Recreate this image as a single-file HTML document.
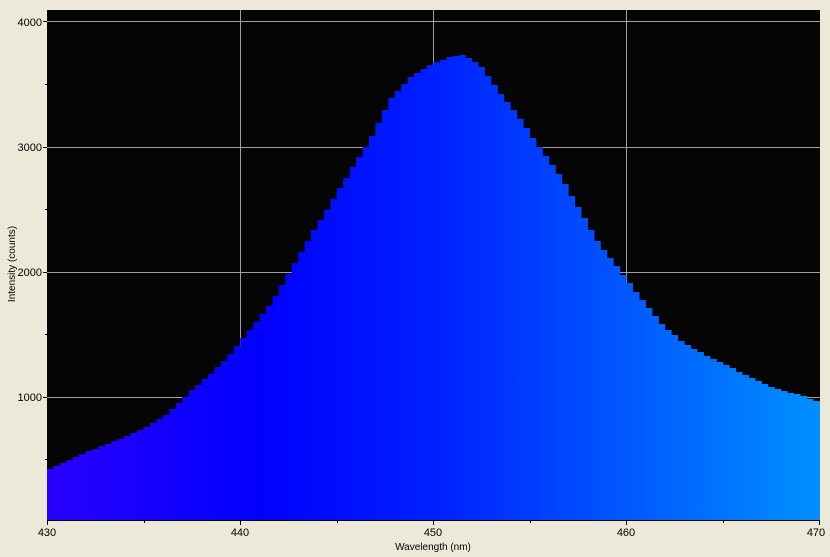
<!DOCTYPE html>
<html><head><style>
body{margin:0;background:#ece9d8;width:830px;height:557px;overflow:hidden;font-family:"Liberation Sans",sans-serif;}
svg{position:absolute;left:0;top:0}
</style></head><body>
<svg id="s" width="830" height="557" xmlns="http://www.w3.org/2000/svg" font-family="Liberation Sans, sans-serif" font-size="11">
<defs><linearGradient id="g" x1="47" x2="820" y1="0" y2="0" gradientUnits="userSpaceOnUse">
<stop offset="0" stop-color="#2a00ff"/><stop offset="0.28" stop-color="#0000ff"/><stop offset="0.5" stop-color="#0020ff"/><stop offset="0.75" stop-color="#0058ff"/><stop offset="1" stop-color="#0090ff"/></linearGradient></defs>
<rect x="47" y="10" width="773" height="510" fill="#050505"/>
<g stroke="#a0a0a0" stroke-width="1">
<line x1="240.5" y1="10" x2="240.5" y2="520"/><line x1="433.5" y1="10" x2="433.5" y2="520"/><line x1="626.5" y1="10" x2="626.5" y2="520"/>
<line x1="47" y1="21.5" x2="820" y2="21.5"/><line x1="47" y1="147.5" x2="820" y2="147.5"/><line x1="47" y1="272.5" x2="820" y2="272.5"/><line x1="47" y1="397.5" x2="820" y2="397.5"/>
</g>
<path id="p" fill="url(#g)"/>
<g stroke="#000"><line x1="47" y1="520.5" x2="820" y2="520.5"/>
<line x1="47.5" y1="520" x2="47.5" y2="525"/><line x1="240.5" y1="520" x2="240.5" y2="525"/><line x1="433.5" y1="520" x2="433.5" y2="525"/><line x1="626.5" y1="520" x2="626.5" y2="525"/><line x1="819.5" y1="520" x2="819.5" y2="525"/>
<line x1="144.5" y1="520" x2="144.5" y2="523"/><line x1="337.5" y1="520" x2="337.5" y2="523"/><line x1="530.5" y1="520" x2="530.5" y2="523"/><line x1="723.5" y1="520" x2="723.5" y2="523"/>
<line x1="43" y1="21.5" x2="47" y2="21.5"/><line x1="43" y1="147.5" x2="47" y2="147.5"/><line x1="43" y1="272.5" x2="47" y2="272.5"/><line x1="43" y1="397.5" x2="47" y2="397.5"/>
<line x1="45" y1="84.5" x2="47" y2="84.5"/><line x1="45" y1="209.5" x2="47" y2="209.5"/><line x1="45" y1="334.5" x2="47" y2="334.5"/><line x1="45" y1="459.5" x2="47" y2="459.5"/>
</g>
<g fill="#000" text-anchor="end"><text x="42" y="26">4000</text><text x="42" y="151">3000</text><text x="42" y="276">2000</text><text x="42" y="401">1000</text></g>
<g fill="#000" text-anchor="middle"><text x="47" y="536">430</text><text x="240" y="536">440</text><text x="433" y="536">450</text><text x="626" y="536">460</text><text x="816" y="536">470</text>
<text x="433" y="550" font-size="10">Wavelength (nm)</text>
<text transform="translate(15,264) rotate(-90)" font-size="10">Intensity (counts)</text></g>
</svg>
<script>
var k=[[47,470],[80,455],[100,447],[130,435],[150,425],[170,412],[190,392],[210,375],[230,355],[250,330],[270,305],[290,272],[310,237],[330,205],[350,172],[370,140],[390,100],[410,78],[430,65],[450,57],[465,55],[480,65],[500,93],[520,118],[540,148],[560,175],[580,210],[600,245],[620,270],[640,297],[660,322],[680,340],[700,352],[720,362],[740,372],[760,382],[780,390],[800,395],[820,402]];
function f(x){for(var i=0;i<k.length-1;i++){if(x<=k[i+1][0]){var t=(x-k[i][0])/(k[i+1][0]-k[i][0]);return k[i][1]+t*(k[i+1][1]-k[i][1]);}}return 402;}
var w=6.44,d="M47 520";for(var x=47;x<820;x+=w){var y=Math.round(f(x+w/2));var x2=Math.min(820,x+w);d+=" L"+x.toFixed(1)+" "+y+" L"+x2.toFixed(1)+" "+y;}
d+=" L820 520 Z";document.getElementById("p").setAttribute("d",d);
</script>
</body></html>
